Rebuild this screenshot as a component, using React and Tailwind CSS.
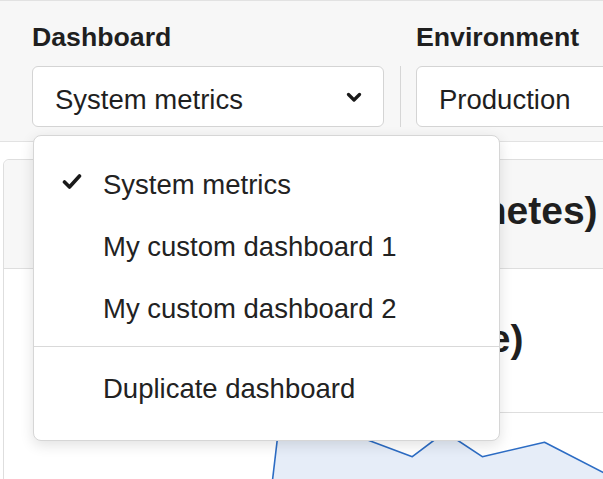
import React from "react";

const ITEMS = [
  { label: "System metrics", active: true },
  { label: "My custom dashboard 1" },
  { label: "My custom dashboard 2" },
];

function Chevron() {
  return (
    <svg width="16" height="10" viewBox="0 0 16 10" fill="none">
      <path d="M2.5 2.5 L8 8 L13.5 2.5" stroke="#1a1a1a" strokeWidth="3.2" strokeLinecap="round" strokeLinejoin="round" />
    </svg>
  );
}

function Check() {
  return (
    <svg width="20" height="17" viewBox="0 0 20 17" fill="none">
      <path d="M2.5 9 L7.5 14 L17.5 3" stroke="#1a1a1a" strokeWidth="3.6" strokeLinecap="round" strokeLinejoin="round" />
    </svg>
  );
}

function MenuItem({ label, active }) {
  return (
    <div className="h-[62px] flex items-center">
      <div className="w-[69px] pl-[28px] flex items-center">
        {active && (
          <span className="-mt-[7px]">
            <Check />
          </span>
        )}
      </div>
      <span className="text-[27.5px] leading-[32px] text-[#222]">{label}</span>
    </div>
  );
}

export default function App() {
  const line = "29,12 91,17 162.3,43.7 195,19 232.3,43.7 294.5,29.3 370,68";
  return (
    <div className="w-[603px] h-[479px] overflow-hidden relative bg-white text-[#1f1f1f] font-['Liberation_Sans',Arial,sans-serif]">
      {/* Header */}
      <div className="h-[142px] bg-[#f7f7f7] border-t border-b border-[#e2e2e2] pl-[32px] pt-[21px] flex items-start">
        <div className="w-[352px] shrink-0">
          <div className="text-[26.7px] leading-[30px] font-bold mb-[14px]">Dashboard</div>
          <div className="h-[61px] bg-white border border-[#d4d4d4] rounded-[6px] pl-[22px] pr-[21px] pt-[6px] flex items-center justify-between">
            <span className="text-[27.5px] leading-[32px]">System metrics</span>
            <span className="-mt-[6px]">
              <Chevron />
            </span>
          </div>
        </div>
        <div className="w-px h-[61px] bg-[#d6d6d6] ml-[16px] mt-[44px] shrink-0" />
        <div className="w-[352px] shrink-0 ml-[15px]">
          <div className="text-[26.7px] leading-[30px] font-bold mb-[14px]">Environment</div>
          <div className="h-[61px] bg-white border border-[#d4d4d4] rounded-[6px] pl-[22px] pt-[6px] flex items-center">
            <span className="text-[27.5px] leading-[32px]">Production</span>
          </div>
        </div>
      </div>

      {/* Card */}
      <div className="mt-[17px] ml-[3px] w-[700px] border border-[#dedede] rounded-tl-[6px]">
        <div className="h-[109px] bg-[#f7f7f7] border-b border-[#dedede] pl-[28px] pb-[7px] flex items-center rounded-tl-[6px]">
          <h2 className="text-[39px] leading-[45px] font-bold whitespace-nowrap">Node CPU usage (Kubernetes)</h2>
        </div>
        <div className="pt-[47px]">
          <h3 className="pl-[36px] text-[39px] leading-[45px] font-bold whitespace-nowrap">Request latency (average)</h3>
          <div className="mt-[51px] ml-[246px] border-t border-[#dedede]">
            <svg width="450" height="80" viewBox="0 0 450 80">
              <polygon points={`22,80 ${line} 370,80`} fill="#e6edf8" />
              <polyline points={`21,80 ${line}`} fill="none" stroke="#2c6cc4" strokeWidth="1.6" strokeLinejoin="round" />
            </svg>
          </div>
        </div>
      </div>

      {/* Dropdown menu */}
      <div className="absolute left-[33px] top-[135px] w-[467px] bg-white border border-[#d6d6d6] rounded-[8px] shadow-[0_4px_14px_rgba(0,0,0,0.12)] pt-[18px] pb-[20px]">
        {ITEMS.map((it) => (
          <MenuItem key={it.label} label={it.label} active={it.active} />
        ))}
        <div className="h-px bg-[#d9d9d9] mt-[6px] mb-[11px]" />
        <MenuItem label="Duplicate dashboard" />
      </div>
    </div>
  );
}
